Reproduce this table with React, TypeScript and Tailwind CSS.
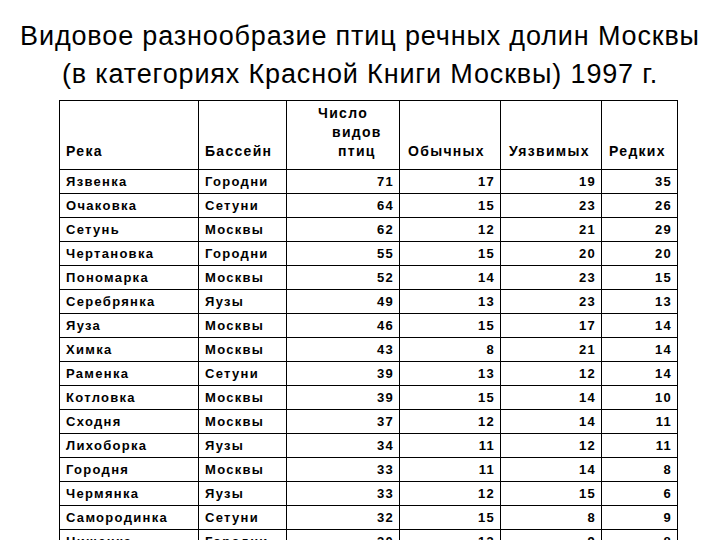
import React from 'react';

type Row = [string, string, number, number, number, number];

const rows: Row[] = [
  ['Язвенка', 'Городни', 71, 17, 19, 35],
  ['Очаковка', 'Сетуни', 64, 15, 23, 26],
  ['Сетунь', 'Москвы', 62, 12, 21, 29],
  ['Чертановка', 'Городни', 55, 15, 20, 20],
  ['Пономарка', 'Москвы', 52, 14, 23, 15],
  ['Серебрянка', 'Яузы', 49, 13, 23, 13],
  ['Яуза', 'Москвы', 46, 15, 17, 14],
  ['Химка', 'Москвы', 43, 8, 21, 14],
  ['Раменка', 'Сетуни', 39, 13, 12, 14],
  ['Котловка', 'Москвы', 39, 15, 14, 10],
  ['Сходня', 'Москвы', 37, 12, 14, 11],
  ['Лихоборка', 'Яузы', 34, 11, 12, 11],
  ['Городня', 'Москвы', 33, 11, 14, 8],
  ['Чермянка', 'Яузы', 33, 12, 15, 6],
  ['Самородинка', 'Сетуни', 32, 15, 8, 9],
  ['Нищенка', 'Городни', 30, 13, 9, 8],
];

const font = { fontFamily: '"Liberation Sans", Arial, sans-serif' };

const App: React.FC = () => {
  return (
    <div className="w-[720px] h-[540px] overflow-hidden bg-white text-black" style={font}>
      <h1 className="pt-[17px] text-center text-[27px] leading-[38px] font-normal tracking-[0.85px]">
        <div>Видовое разнообразие птиц речных долин Москвы</div>
        <div>(в категориях Красной Книги Москвы) 1997 г.</div>
      </h1>
      <table className="ml-[59px] mt-[7px] table-fixed border-collapse w-[618px] font-bold tracking-[1.3px]">
        <colgroup>
          <col className="w-[139px]" />
          <col className="w-[88px]" />
          <col className="w-[113px]" />
          <col className="w-[101px]" />
          <col className="w-[101px]" />
          <col className="w-[76px]" />
        </colgroup>
        <thead>
          <tr className="h-[69px] text-[14px] leading-[19px]">
            <th className="border border-black align-bottom text-left font-bold pl-[6px] pb-[8px]">Река</th>
            <th className="border border-black align-bottom text-left font-bold pl-[6px] pb-[8px]">Бассейн</th>
            <th className="border border-black align-top text-left font-bold pt-[3px]">
              <div className="pl-[31px]">Число</div>
              <div className="pl-[45px]">видов</div>
              <div className="pl-[51px]">птиц</div>
            </th>
            <th className="border border-black align-bottom text-left font-bold pl-[8px] pb-[8px]">Обычных</th>
            <th className="border border-black align-bottom text-left font-bold pl-[8px] pb-[8px]">Уязвимых</th>
            <th className="border border-black align-bottom text-left font-bold pl-[7px] pb-[8px]">Редких</th>
          </tr>
        </thead>
        <tbody className="text-[13px]">
          {rows.map((r) => (
            <tr key={r[0]} className="h-[24px]">
              <td className="border border-black pl-[6px] p-0">{r[0]}</td>
              <td className="border border-black pl-[6px] p-0">{r[1]}</td>
              <td className="border border-black text-right pr-[5px] p-0">{r[2]}</td>
              <td className="border border-black text-right pr-[5px] p-0">{r[3]}</td>
              <td className="border border-black text-right pr-[5px] p-0">{r[4]}</td>
              <td className="border border-black text-right pr-[5px] p-0">{r[5]}</td>
            </tr>
          ))}
        </tbody>
      </table>
    </div>
  );
};

export default App;
